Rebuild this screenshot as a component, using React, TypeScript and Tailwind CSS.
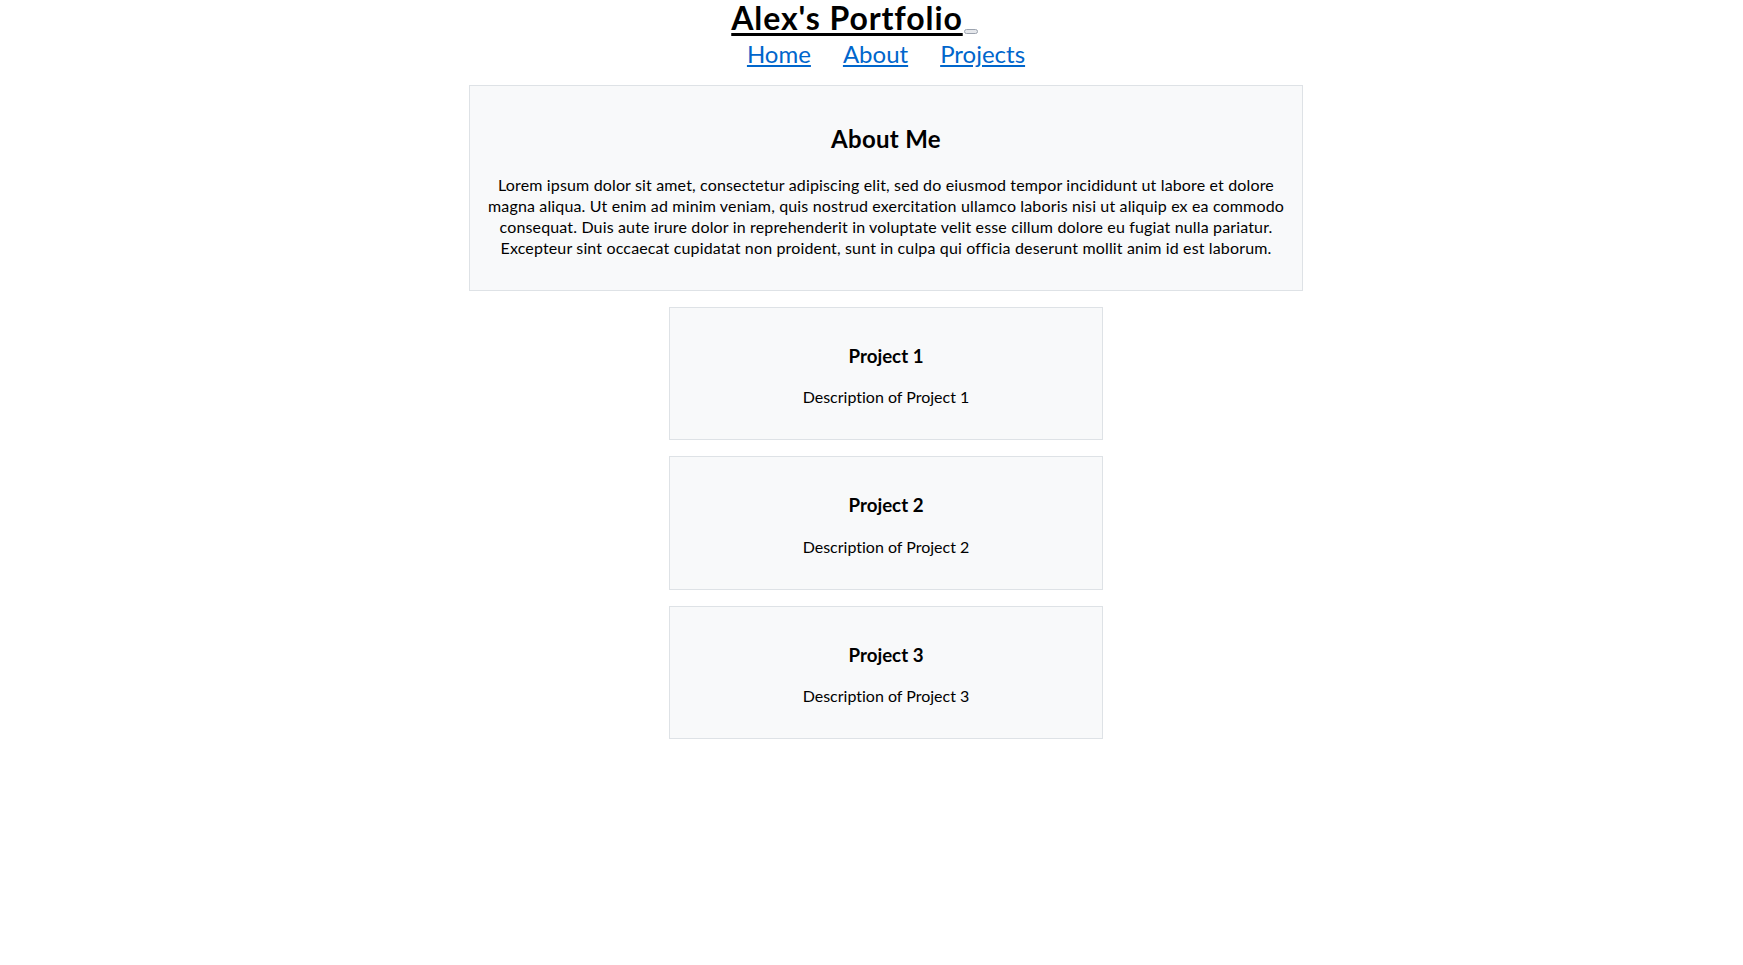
import React from "react";

const projects = [
  { title: "Project 1", desc: "Description of Project 1" },
  { title: "Project 2", desc: "Description of Project 2" },
  { title: "Project 3", desc: "Description of Project 3" },
];

export default function App() {
  return (
    <div className="min-h-screen bg-white text-black font-['Lato','Noto_Sans',sans-serif] [font-variant-ligatures:none]">
      <div className="pl-[29px]">
        <header>
          <div className="flex justify-center pr-[63px]">
            <a href="#" className="flex items-end text-black">
              <h1 className="text-[32px] font-bold leading-[35px] tracking-[0.9px] underline decoration-[3px] underline-offset-[3px]">
                Alex's Portfolio
              </h1>
              <span className="mb-[1px] ml-[1px] block h-[5px] w-[14px] rounded-full border border-[#9ca3af] bg-[#e5e7eb]"></span>
            </a>
          </div>
          <nav className="mt-[3px] flex justify-center gap-8 text-[24px] leading-[32px]">
            <a href="#" className="text-[#0066cc] underline underline-offset-[2px]">Home</a>
            <a href="#" className="text-[#0066cc] underline underline-offset-[2px]">About</a>
            <a href="#" className="text-[#0066cc] underline underline-offset-[2px]">Projects</a>
          </nav>
        </header>
        <main className="mt-[15px] flex flex-col items-center gap-4">
          <section className="w-[834px] border border-[#dee2e6] bg-[#f8f9fa] p-4 text-center">
            <h2 className="mt-[21px] mb-[19px] text-[24px] font-bold leading-[32px] tracking-[0.3px]">About Me</h2>
            <p className="mb-4 text-[16px] leading-[21px] tracking-[0.15px] whitespace-nowrap">
              Lorem ipsum dolor sit amet, consectetur adipiscing elit, sed do eiusmod tempor incididunt ut labore et dolore
              <br />
              magna aliqua. Ut enim ad minim veniam, quis nostrud exercitation ullamco laboris nisi ut aliquip ex ea commodo
              <br />
              consequat. Duis aute irure dolor in reprehenderit in voluptate velit esse cillum dolore eu fugiat nulla pariatur.
              <br />
              Excepteur sint occaecat cupidatat non proident, sunt in culpa qui officia deserunt mollit anim id est laborum.
            </p>
          </section>
          {projects.map((p) => (
            <section
              key={p.title}
              className="w-[434px] border border-[#dee2e6] bg-[#f8f9fa] p-4 text-center"
            >
              <h3 className="mt-[19.72px] mb-[17.72px] text-[18.72px] font-bold leading-[25px]">{p.title}</h3>
              <p className="mb-4 text-[16px] leading-[21px]">{p.desc}</p>
            </section>
          ))}
        </main>
      </div>
    </div>
  );
}
